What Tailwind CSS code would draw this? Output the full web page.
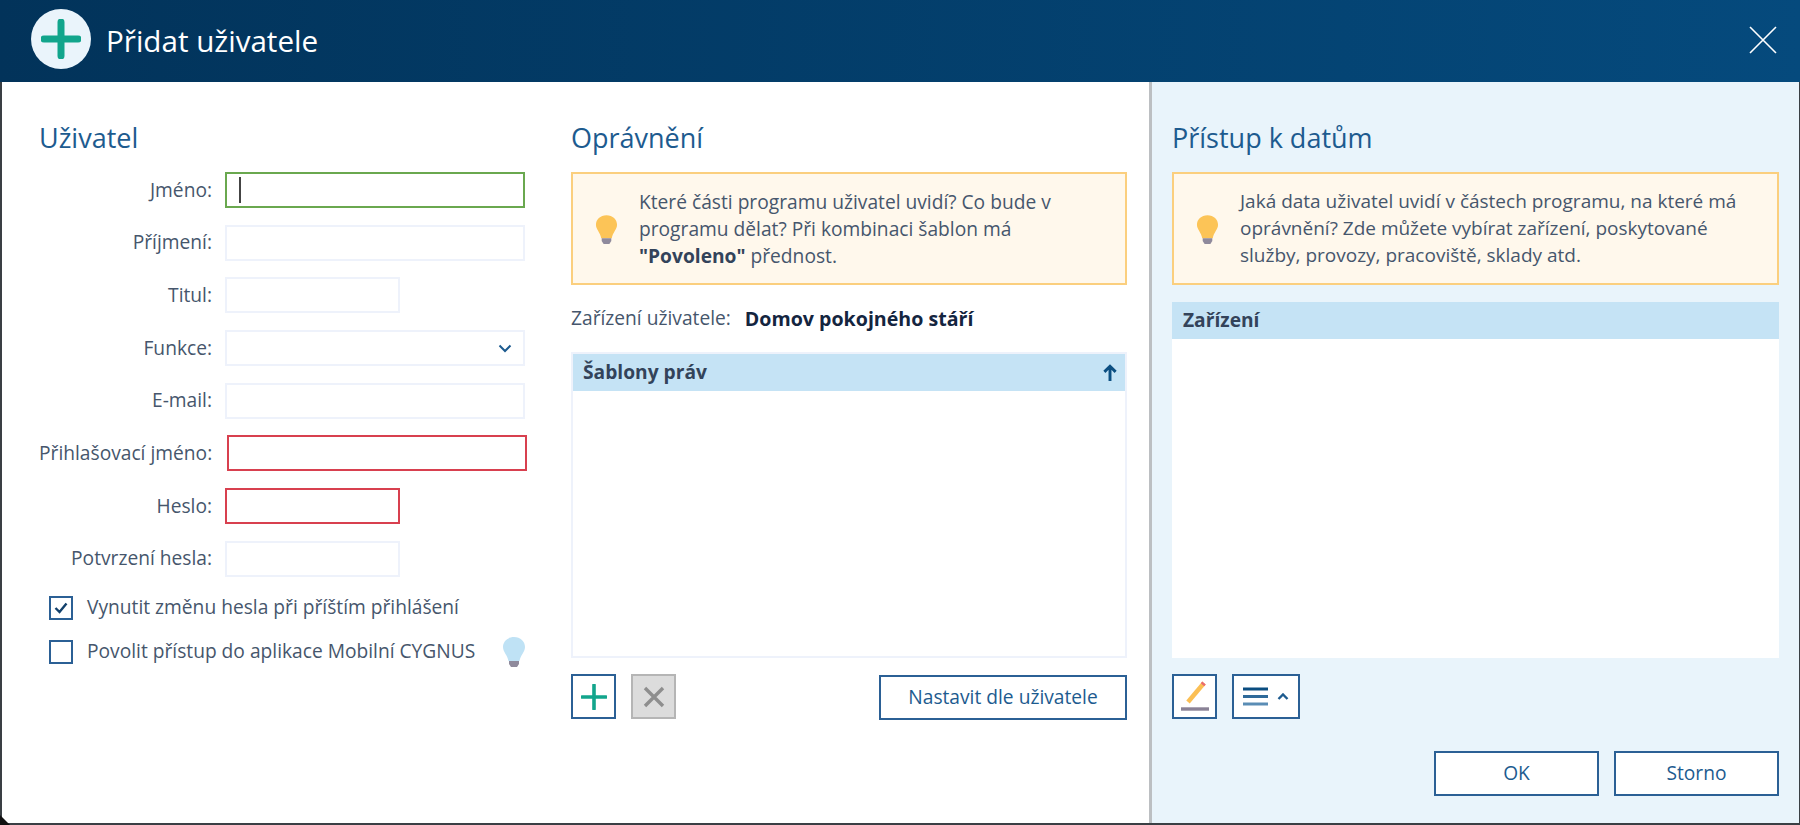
<!DOCTYPE html>
<html lang="cs">
<head>
    <meta charset="UTF-8">
    <title>Přidat uživatele</title>
    <script src="https://cdn.jsdelivr.net/npm/@tailwindcss/browser@4"></script>
</head>
<body class="bg-white font-['Open_Sans',sans-serif] text-[19.2px] text-[#46566c]">
<div class="relative flex flex-col w-[1800px] h-[825px] overflow-hidden">
    <!-- header -->
    <header class="flex items-center h-[82px] pl-[31px] pr-[23px] bg-gradient-to-r from-[#02335a] to-[#054a7d] text-white">
        <div class="flex items-center justify-center w-[60px] h-[60px] rounded-full bg-[#eaf4fb] mt-[-4px]">
            <svg width="40" height="40" viewBox="0 0 40 40"><path d="M20 3V37M3 20H37" stroke="#12a58c" stroke-width="7" stroke-linecap="round"/></svg>
        </div>
        <h1 class="ml-[15px] text-[29.6px] leading-[36px] mt-[-1px]">Přidat uživatele</h1>
        <svg class="ml-auto mt-[-3px]" width="28" height="28" viewBox="0 0 28 28"><path d="M1 1L27 27M27 1L1 27" stroke="#fff" stroke-width="1.6"/></svg>
    </header>

    <!-- body -->
    <div class="flex flex-1 border-l-2 border-r border-b-2 border-[#3a3f44]">
        <div class="flex w-[1147px] bg-white">
            <!-- Uživatel -->
            <section class="w-[569px] pl-[37px] pt-[40px]">
                <h2 class="text-[27px] leading-[32px] text-[#1d5b8f]">Uživatel</h2>
                <div class="grid grid-cols-[173px_1fr] gap-x-[13px] gap-y-[16.7px] mt-[18px] items-center text-right">
                    <label class="whitespace-nowrap">Jméno:</label>
                    <div class="flex items-center w-[300px] h-[36px] pl-[12px] border-2 border-[#6aa84f] bg-white"><span class="w-[2px] h-[26px] bg-[#444]"></span></div>
                    <label class="whitespace-nowrap">Příjmení:</label>
                    <div class="w-[300px] h-[36px] border-2 border-[#eef2fb]"></div>
                    <label class="whitespace-nowrap">Titul:</label>
                    <div class="w-[175px] h-[36px] border-2 border-[#eef2fb]"></div>
                    <label class="whitespace-nowrap">Funkce:</label>
                    <div class="flex items-center justify-end w-[300px] h-[36px] pr-[11px] border-2 border-[#eef2fb]">
                        <svg width="14" height="9" viewBox="0 0 14 9"><path d="M1.5 1.5L7 7L12.5 1.5" fill="none" stroke="#1d5b8f" stroke-width="2"/></svg>
                    </div>
                    <label class="whitespace-nowrap">E-mail:</label>
                    <div class="w-[300px] h-[36px] border-2 border-[#eef2fb]"></div>
                    <label class="whitespace-nowrap">Přihlašovací jméno:</label>
                    <div class="w-[300px] h-[36px] ml-[2px] border-2 border-[#d8404f]"></div>
                    <label class="whitespace-nowrap">Heslo:</label>
                    <div class="w-[175px] h-[36px] border-2 border-[#d8404f]"></div>
                    <label class="whitespace-nowrap">Potvrzení hesla:</label>
                    <div class="w-[175px] h-[36px] border-2 border-[#eef2fb]"></div>
                </div>
                <div class="flex items-center h-[24px] mt-[19px] ml-[10px]">
                    <span class="flex items-center justify-center w-[24px] h-[24px] border-2 border-[#2b6095]">
                        <svg width="14" height="12" viewBox="0 0 14 12"><path d="M1.5 6L5.5 10L12.5 1.5" fill="none" stroke="#12406b" stroke-width="2.4"/></svg>
                    </span>
                    <span class="ml-[14px] whitespace-nowrap">Vynutit změnu hesla při příštím přihlášení</span>
                </div>
                <div class="flex items-center h-[24px] mt-[20px] ml-[10px]">
                    <span class="w-[24px] h-[24px] border-2 border-[#2b6095]"></span>
                    <span class="ml-[14px] whitespace-nowrap">Povolit přístup do aplikace Mobilní CYGNUS</span>
                    <svg class="ml-[27px]" width="24" height="32" viewBox="0 0 24 32"><path d="M12 1C5.5 1 1 5.5 1 11c0 5 4.500 8 5.500 14h11C18.500 19 23 16 23 11 23 5.500 18.500 1 12 1Z" fill="#bfe2f5"/><path d="M7 25h10v3l-2 3H9l-2-3Z" fill="#8f8a9c"/></svg>
                </div>
            </section>

            <!-- Oprávnění -->
            <section class="flex flex-col w-[556px] pt-[40px]">
                <h2 class="text-[27px] leading-[32px] text-[#1d5b8f]">Oprávnění</h2>
                <div class="flex items-center h-[113px] mt-[18px] pl-[22px] border-2 border-[#fbcf7e] bg-[#fff8ec]">
                    <svg class="shrink-0 mt-[2px]" width="23" height="31" viewBox="0 0 24 32"><path d="M12 1C5.500 1 1 5.500 1 11c0 5 4.500 8 5.500 14h11C18.500 19 23 16 23 11 23 5.500 18.500 1 12 1Z" fill="#fcc457"/><path d="M7 25h10v3l-2 3H9l-2-3Z" fill="#8f8a9c"/></svg>
                    <p class="ml-[21px] w-[470px] text-[19.2px] leading-[27px]">Které části programu uživatel uvidí? Co bude v programu dělat? Při kombinaci šablon má <b class="text-[#33435a]">"Povoleno"</b> přednost.</p>
                </div>
                <div class="flex items-center h-[67px]">
                    <span>Zařízení uživatele:</span>
                    <b class="ml-[14px] text-[19.6px] text-[#14253f]">Domov pokojného stáří</b>
                </div>
                <div class="flex flex-col h-[306px] border-2 border-[#eef2fb]">
                    <div class="flex items-center justify-between h-[37px] pl-[10px] pr-[7px] bg-[#c5e3f5] font-bold text-[#33435a]">
                        <span>Šablony práv</span>
                        <svg width="16" height="18" viewBox="0 0 14 16"><path d="M7 15V2M2 7L7 2L12 7" fill="none" stroke="#0c4f82" stroke-width="2.6"/></svg>
                    </div>
                </div>
                <div class="flex items-start mt-[16px]">
                    <button class="flex items-center justify-center w-[45px] h-[45px] border-2 border-[#2b6095]">
                        <svg width="26" height="26" viewBox="0 0 26 26"><path d="M13 1V25M1 13H25" stroke="#12a58c" stroke-width="3.6" stroke-linecap="round"/></svg>
                    </button>
                    <button class="flex items-center justify-center w-[45px] h-[45px] ml-[15px] border-2 border-[#b5b5b5] bg-[#dcdcdc]">
                        <svg width="22" height="22" viewBox="0 0 22 22"><path d="M2 2L20 20M20 2L2 20" stroke="#8e8e8e" stroke-width="3.4"/></svg>
                    </button>
                    <button class="ml-auto w-[248px] h-[45px] mt-[1px] border-2 border-[#2b6095] text-[#1d5b8f]">Nastavit dle uživatele</button>
                </div>
            </section>
        </div>

        <!-- Přístup k datům -->
        <section class="flex flex-col flex-1 pt-[40px] pl-[20px] pr-[20px] border-l-[3px] border-[#bcbfc2] bg-[#e9f4fb]">
            <h2 class="text-[27px] leading-[32px] text-[#1d5b8f]">Přístup k datům</h2>
            <div class="flex items-center h-[113px] mt-[18px] pl-[22px] border-2 border-[#fbcf7e] bg-[#fff8ec]">
                <svg class="shrink-0 mt-[2px]" width="23" height="31" viewBox="0 0 24 32"><path d="M12 1C5.500 1 1 5.500 1 11c0 5 4.500 8 5.500 14h11C18.500 19 23 16 23 11 23 5.500 18.500 1 12 1Z" fill="#fcc457"/><path d="M7 25h10v3l-2 3H9l-2-3Z" fill="#8f8a9c"/></svg>
                <p class="ml-[21px] w-[510px] text-[19px] leading-[27px]">Jaká data uživatel uvidí v částech programu, na které má oprávnění? Zde můžete vybírat zařízení, poskytované služby, provozy, pracoviště, sklady atd.</p>
            </div>
            <div class="flex flex-col h-[356px] mt-[17px] bg-white">
                <div class="flex items-center h-[37px] pl-[11px] bg-[#c5e3f5] font-bold text-[#33435a]">Zařízení</div>
            </div>
            <div class="flex mt-[16px]">
                <button class="flex items-center justify-center w-[45px] h-[45px] border-2 border-[#2b6095] bg-white">
                    <svg width="28" height="34" viewBox="0 0 28 34"><path d="M7 22L23 3" stroke="#fbbf54" stroke-width="4.500"/><path d="M21.500 4.800L23 3" stroke="#ea6a70" stroke-width="4.500"/><path d="M0 29H28" stroke="#8a8296" stroke-width="3.400"/></svg>
                </button>
                <button class="flex items-center justify-center gap-[9px] w-[68px] h-[45px] ml-[15px] border-2 border-[#2b6095] bg-white">
                    <svg width="25" height="19" viewBox="0 0 25 19"><path d="M0 2H25" stroke="#0a4d80" stroke-width="3"/><path d="M0 9.500H25" stroke="#2f6a9a" stroke-width="3"/><path d="M0 17H25" stroke="#5a8db5" stroke-width="3"/></svg>
                    <svg width="12" height="7" viewBox="0 0 12 7"><path d="M1.500 6L6 1.500L10.500 6" fill="none" stroke="#1d5b8f" stroke-width="2.400"/></svg>
                </button>
            </div>
            <div class="flex justify-end gap-[15px] mt-[32px]">
                <button class="w-[165px] h-[45px] border-2 border-[#2b6095] bg-white text-[#1d5b8f]">OK</button>
                <button class="w-[165px] h-[45px] border-2 border-[#2b6095] bg-white text-[#1d5b8f]">Storno</button>
            </div>
        </section>
    </div>

    <!-- black window corner -->
    <svg class="absolute left-0 bottom-0" width="10" height="10" viewBox="0 0 10 10"><path d="M0 0L10 10H0Z" fill="#111"/></svg>
</div>
</body>
</html>
